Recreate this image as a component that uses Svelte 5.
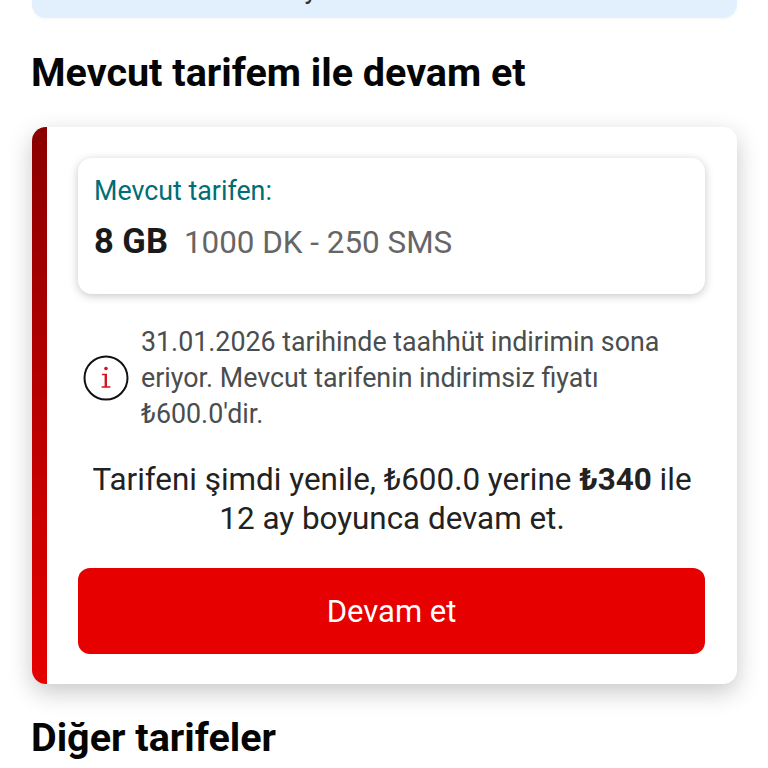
<script>
  const heading = 'Mevcut tarifem ile devam et'
</script>

<main class="page">
  <div class="banner"><span class="banner-text">Tarifeni yenile</span></div>

  <h2 class="title first">{heading}</h2>

  <section class="card">
    <div class="stripe"></div>
    <div class="card-body">
      <div class="current">
        <p class="current-label">Mevcut tarifen:</p>
        <p class="current-plan"><strong>8 GB</strong><span>1000 DK - 250 SMS</span></p>
      </div>

      <div class="notice">
        <span class="info-icon">
          <svg width="46" height="46" viewBox="0 0 46 46" aria-hidden="true">
            <circle cx="23" cy="23" r="21.5" fill="none" stroke="#111" stroke-width="2" />
            <circle cx="23" cy="13.5" r="1.8" fill="#d5121e" />
            <path d="M19 18.7h5v12.6h3.4v1.5h-8.8v-1.5h3v-11.1h-2.6z" fill="#d5121e" />
          </svg>
        </span>
        <p>31.01.2026 tarihinde taahhüt indirimin sona eriyor. Mevcut tarifenin indirimsiz fiyatı ₺600.0'dir.</p>
      </div>

      <p class="offer">Tarifeni şimdi yenile, ₺600.0 yerine <strong>₺340</strong> ile 12 ay boyunca devam et.</p>

      <button class="cta">Devam et</button>
    </div>
  </section>

  <h2 class="title second">Diğer tarifeler</h2>
</main>

<style>
  :global(body) {
    margin: 0;
    background: #fff;
    overflow: hidden;
  }

  .page {
    height: 768px;
    overflow: hidden;
    padding: 0 31px 0 32px;
    font-family: Roboto, "Noto Sans", sans-serif;
    color: #111;
  }

  .banner {
    height: 60px;
    margin-top: -42px;
    background: #e2f0fd;
    border-radius: 0 0 14px 14px;
    padding: 14px 0 0 176px;
    box-sizing: border-box;
    box-shadow: 0 1px 3px rgba(0, 0, 0, 0.04);
  }

  .banner-text {
    display: block;
    font-size: 27px;
    line-height: 34px;
    color: #333;
  }

  .title {
    margin: 0 0 0 -1px;
    font-size: 39.5px;
    line-height: 44px;
    font-weight: 700;
    color: #050505;
  }

  .first {
    margin-top: 33px;
  }

  .second {
    margin-top: 32px;
  }

  .card {
    display: flex;
    margin-top: 32px;
    height: 557px;
    border-radius: 14px;
    overflow: hidden;
    background: #fff;
    box-shadow: 0 8px 24px rgba(0, 0, 0, 0.22);
  }

  .stripe {
    flex: 0 0 15px;
    background: linear-gradient(180deg, #8a0000 0%, #e60000 100%);
  }

  .card-body {
    flex: 1;
    padding: 31px 32px 0 31px;
    min-width: 0;
  }

  .current {
    height: 136px;
    box-sizing: border-box;
    padding: 16px 16px 0;
    border-radius: 14px;
    background: #fff;
    box-shadow: 0 2px 10px rgba(0, 0, 0, 0.22);
  }

  .current-label {
    margin: 0;
    font-size: 26.8px;
    line-height: 34px;
    color: #006d77;
  }

  .current-plan {
    margin: 15px 0 0;
    display: flex;
    align-items: baseline;
    gap: 16px;
    font-size: 31.4px;
    line-height: 36px;
    color: #666;
  }

  .current-plan strong {
    font-size: 34.5px;
    color: #1a1a1a;
  }

  .notice {
    display: flex;
    align-items: center;
    gap: 12px;
    margin: 30px 0 0 5px;
  }

  .info-icon {
    flex: 0 0 46px;
    display: flex;
  }

  .notice p {
    margin: 0;
    font-size: 26.8px;
    line-height: 36px;
    color: #4a4d4e;
  }

  .offer {
    margin: 28px 0 0;
    padding-left: 1px;
    text-align: center;
    font-size: 31.4px;
    line-height: 39px;
    color: #222;
  }

  .cta {
    display: block;
    width: 100%;
    height: 86px;
    margin-top: 30px;
    border: 0;
    border-radius: 12px;
    background: #e60000;
    color: #fff;
    font: 400 31px Roboto, sans-serif;
  }
</style>
